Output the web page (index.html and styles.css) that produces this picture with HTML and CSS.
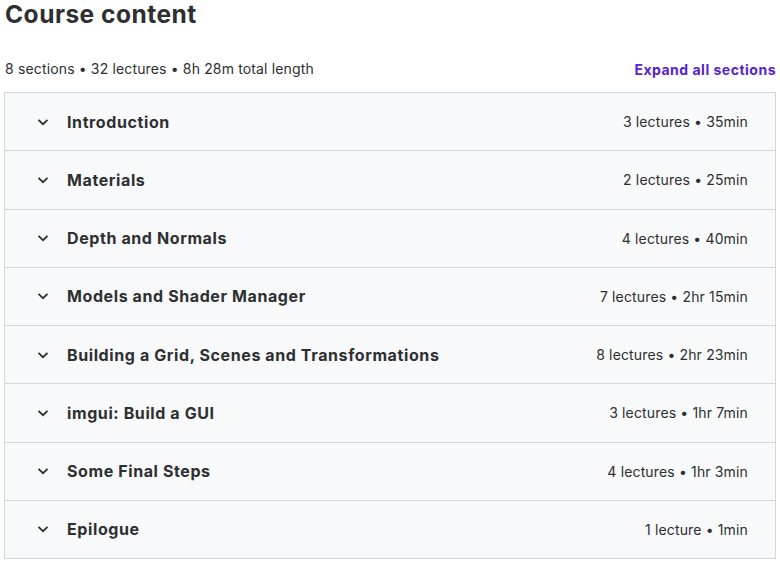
FILE: index.html
```html
<!DOCTYPE html>
<html lang="en">
<head>
  <meta charset="UTF-8" />
  <meta name="viewport" content="width=device-width, initial-scale=1.0"/>
  <title>Course content</title>
  <link rel="stylesheet" href="styles.css">
</head>
<body>

  <div class="curriculo">
    <h2 class="titulo">Course content</h2>

    <div class="resumo">
      <span>8 sections • 32 lectures • 8h 28m total length</span>
      <button class="expandir">Expand all sections</button>
    </div>

    <div class="secoes">
      <div class="secao">
        <svg class="seta" viewBox="0 0 12 8"><path d="M1.5 1.8 6 6.2 10.5 1.8"/></svg>
        <span class="nome">Introduction</span>
        <span class="info">3 lectures • 35min</span>
      </div>
      <div class="secao">
        <svg class="seta" viewBox="0 0 12 8"><path d="M1.5 1.8 6 6.2 10.5 1.8"/></svg>
        <span class="nome">Materials</span>
        <span class="info">2 lectures • 25min</span>
      </div>
      <div class="secao">
        <svg class="seta" viewBox="0 0 12 8"><path d="M1.5 1.8 6 6.2 10.5 1.8"/></svg>
        <span class="nome">Depth and Normals</span>
        <span class="info">4 lectures • 40min</span>
      </div>
      <div class="secao">
        <svg class="seta" viewBox="0 0 12 8"><path d="M1.5 1.8 6 6.2 10.5 1.8"/></svg>
        <span class="nome">Models and Shader Manager</span>
        <span class="info">7 lectures • 2hr 15min</span>
      </div>
      <div class="secao">
        <svg class="seta" viewBox="0 0 12 8"><path d="M1.5 1.8 6 6.2 10.5 1.8"/></svg>
        <span class="nome">Building a Grid, Scenes and Transformations</span>
        <span class="info">8 lectures • 2hr 23min</span>
      </div>
      <div class="secao">
        <svg class="seta" viewBox="0 0 12 8"><path d="M1.5 1.8 6 6.2 10.5 1.8"/></svg>
        <span class="nome">imgui: Build a GUI</span>
        <span class="info">3 lectures • 1hr 7min</span>
      </div>
      <div class="secao">
        <svg class="seta" viewBox="0 0 12 8"><path d="M1.5 1.8 6 6.2 10.5 1.8"/></svg>
        <span class="nome">Some Final Steps</span>
        <span class="info">4 lectures • 1hr 3min</span>
      </div>
      <div class="secao">
        <svg class="seta" viewBox="0 0 12 8"><path d="M1.5 1.8 6 6.2 10.5 1.8"/></svg>
        <span class="nome">Epilogue</span>
        <span class="info">1 lecture • 1min</span>
      </div>
    </div>
  </div>

</body>
</html>
```

FILE: styles.css
```css
* {
  box-sizing: border-box;
}

body, html {
  margin: 0;
  padding: 0;
  background: #ffffff;
  font-family: Inter, "Noto Sans", sans-serif;
  color: #2d2f31;
}

.curriculo {
  padding: 0 4px 0 4px;
}

.titulo {
  margin: 0;
  padding-left: 1px;
  font-size: 24.5px;
  line-height: 29px;
  letter-spacing: 0.5px;
  font-weight: 700;
}

.resumo {
  display: flex;
  justify-content: space-between;
  align-items: center;
  margin: 29px 0 12px 0;
  padding-left: 1px;
  font-size: 14px;
  line-height: 20px;
  letter-spacing: 0.15px;
}

.expandir {
  border: none;
  background: none;
  padding: 0;
  margin-top: 2px;
  font-family: inherit;
  font-size: 14px;
  line-height: 20px;
  letter-spacing: 0.5px;
  font-weight: 700;
  color: #5624d0;
  cursor: pointer;
}

.secoes {
  border: 1px solid #d1d7dc;
  border-bottom: none;
}

.secao {
  display: flex;
  align-items: center;
  height: 58.25px;
  padding: 0 27px 0 32px;
  background: #f7f9fa;
  border-bottom: 1px solid #d1d7dc;
}

.seta {
  width: 12px;
  height: 8px;
  fill: none;
  stroke: #2d2f31;
  stroke-width: 1.8;
  margin-right: 18px;
}

.nome {
  flex: 1;
  font-size: 16px;
  font-weight: 700;
  letter-spacing: 0.6px;
}

.info {
  font-size: 14px;
  letter-spacing: 0.15px;
}
```
